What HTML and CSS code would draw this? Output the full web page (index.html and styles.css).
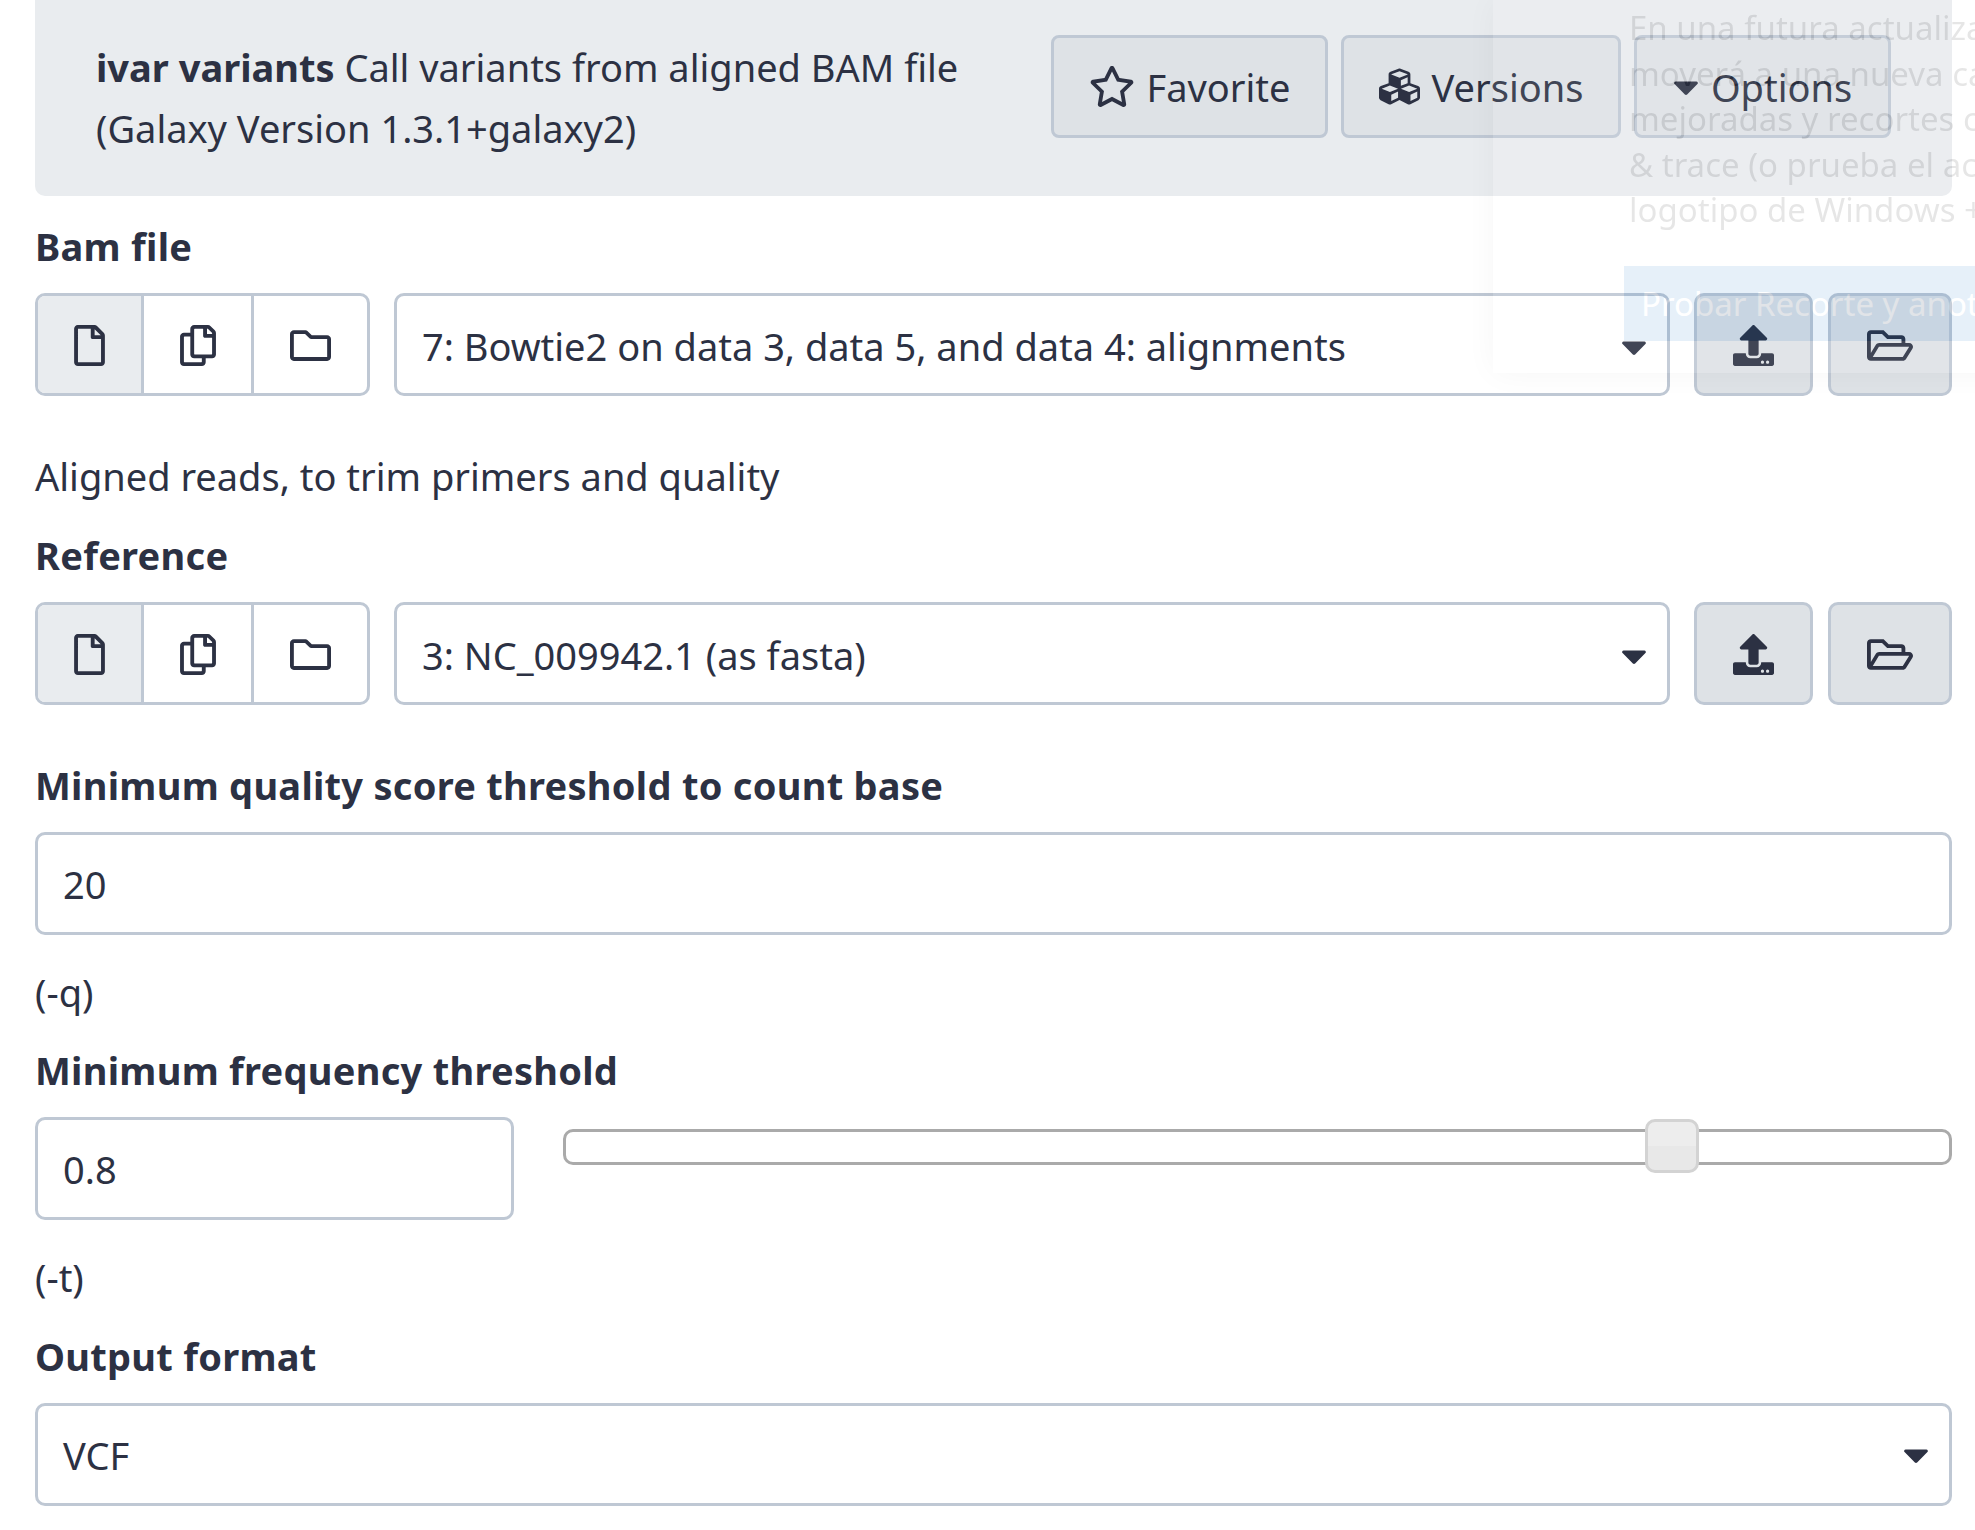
FILE: index.html
```html
<!DOCTYPE html>
<html>
<head>
    <meta charset="UTF-8">
    <title>ivar variants</title>
    <link rel="stylesheet" href="styles.css">
</head>
<body>
    <svg class="sprites" xmlns="http://www.w3.org/2000/svg">
        <symbol id="i-star" viewBox="0 0 576 512"><path d="M528.1 171.5L382 150.2 316.7 17.8c-11.7-23.6-45.6-23.9-57.4 0L194 150.2 47.9 171.5c-26.2 3.8-36.7 36.1-17.7 54.6l105.7 103-25 145.5c-4.5 26.3 23.2 46 46.4 33.7L288 439.6l130.7 68.7c23.2 12.2 50.9-7.4 46.4-33.7l-25-145.5 105.7-103c19-18.5 8.5-50.8-17.7-54.6zM388.6 312.3l23.7 138.4L288 385.4l-124.3 65.3 23.7-138.4-100.6-98 139-20.2 62.2-126 62.2 126 139 20.2-100.6 98z"/></symbol>
        <symbol id="i-cubes" viewBox="0 0 512 512"><path d="M488.6 250.2L392 214V105.5c0-15-9.3-28.4-23.4-33.7l-100-37.5c-8.1-3.1-17.1-3.1-25.3 0l-100 37.5c-14.1 5.3-23.4 18.7-23.4 33.7V214l-96.6 36.2C9.3 255.5 0 268.9 0 283.9V394c0 13.6 7.7 26.1 19.9 32.2l100 50c10.1 5.1 22.1 5.1 32.2 0l103.9-52 103.9 52c10.1 5.1 22.1 5.1 32.2 0l100-50c12.2-6.1 19.9-18.6 19.9-32.2V283.9c0-15-9.3-28.4-23.4-33.7zM358 214.8l-85 31.9v-68.2l85-37v73.3zM154 104.1l102-38.2 102 38.2v.6l-102 41.4-102-41.4v-.6zm84 291.1l-85 42.5v-79.1l85-38.8v75.4zm0-112l-102 41.4-102-41.4v-.6l102-38.2 102 38.2v.6zm240 112l-85 42.5v-79.1l85-38.8v75.4zm0-112l-102 41.4-102-41.4v-.6l102-38.2 102 38.2v.6z"/></symbol>
        <symbol id="i-caret" viewBox="0 0 320 512"><path d="M31.3 192h257.3c17.8 0 26.7 21.5 14.1 34.1L174.1 354.8c-7.8 7.8-20.5 7.8-28.3 0L17.2 226.1C4.6 213.5 13.5 192 31.3 192z"/></symbol>
        <symbol id="i-file" viewBox="0 0 384 512"><path d="M369.9 97.9L286 14C277 5 264.8-.1 252.1-.1H48C21.5 0 0 21.5 0 48v416c0 26.5 21.5 48 48 48h288c26.5 0 48-21.5 48-48V131.9c0-12.7-5.1-25-14.1-34zM332.1 128H256V51.9l76.1 76.1zM48 464V48h160v104c0 13.3 10.7 24 24 24h104v288H48z"/></symbol>
        <symbol id="i-copy" viewBox="0 0 448 512"><path d="M433.941 65.941l-51.882-51.882A48 48 0 0 0 348.118 0H176c-26.51 0-48 21.49-48 48v48H48c-26.51 0-48 21.49-48 48v320c0 26.51 21.49 48 48 48h224c26.51 0 48-21.49 48-48v-48h80c26.51 0 48-21.49 48-48V99.882a48 48 0 0 0-14.059-33.941zM266 464H54a6 6 0 0 1-6-6V150a6 6 0 0 1 6-6h74v224c0 26.51 21.49 48 48 48h96v42a6 6 0 0 1-6 6zm128-96H182a6 6 0 0 1-6-6V54a6 6 0 0 1 6-6h106v88c0 13.255 10.745 24 24 24h88v202a6 6 0 0 1-6 6zm6-256h-64V48h9.632c1.591 0 3.117.632 4.243 1.757l48.368 48.368a6 6 0 0 1 1.757 4.243V112z"/></symbol>
        <symbol id="i-folder" viewBox="0 0 512 512"><path d="M464 128H272l-54.63-54.63c-6-6-14.14-9.37-22.63-9.37H48C21.49 64 0 85.49 0 112v288c0 26.51 21.49 48 48 48h416c26.51 0 48-21.49 48-48V176c0-26.51-21.49-48-48-48zm0 272H48V112h140.12l54.63 54.63c6 6 14.14 9.37 22.63 9.37H464v224z"/></symbol>
        <symbol id="i-upload" viewBox="0 0 512 512"><path d="M296 384h-80c-13.3 0-24-10.7-24-24V192h-87.7c-17.8 0-26.7-21.5-14.1-34.1L242.3 5.7c7.5-7.5 19.8-7.5 27.3 0l152.2 152.2c12.6 12.6 3.7 34.1-14.1 34.1H320v168c0 13.3-10.7 24-24 24zm216-8v112c0 13.3-10.7 24-24 24H24c-13.3 0-24-10.7-24-24V376c0-13.3 10.7-24 24-24h136v8c0 30.9 25.1 56 56 56h80c30.9 0 56-25.1 56-56v-8h136c13.3 0 24 10.7 24 24zm-124 88c0-11-9-20-20-20s-20 9-20 20 9 20 20 20 20-9 20-20zm64 0c0-11-9-20-20-20s-20 9-20 20 9 20 20 20 20-9 20-20z"/></symbol>
        <symbol id="i-folder-open" viewBox="0 0 576 512"><path d="M527.9 224H480v-48c0-26.5-21.5-48-48-48H272l-64-64H48C21.5 64 0 85.5 0 112v288c0 26.5 21.5 48 48 48h400c16.5 0 31.9-8.5 40.7-22.6l79.9-128c20-31.9-3-73.4-40.7-73.4zM48 118c0-3.3 2.7-6 6-6h134.1l64 64H426c3.3 0 6 2.7 6 6v42H152c-16.8 0-32.4 8.8-41.1 23.2L48 351.4zm400 282H72l77.2-128H528z"/></symbol>
    </svg>

    <div class="tool-header">
        <div class="tool-title"><b>ivar variants</b> Call variants from aligned BAM file (Galaxy Version 1.3.1+galaxy2)</div>
        <div class="tool-buttons">
            <button class="btn btn-favorite"><svg class="icon icon-star"><use href="#i-star"/></svg>Favorite</button>
            <button class="btn btn-versions"><svg class="icon icon-cubes"><use href="#i-cubes"/></svg>Versions</button>
            <button class="btn btn-options"><svg class="icon icon-caret"><use href="#i-caret"/></svg>Options</button>
        </div>
    </div>

    <div class="field">
        <div class="label">Bam file</div>
        <div class="data-row">
            <div class="btn-group">
                <div class="group-btn group-btn-active"><svg class="icon icon-file"><use href="#i-file"/></svg></div>
                <div class="group-btn"><svg class="icon icon-copy"><use href="#i-copy"/></svg></div>
                <div class="group-btn"><svg class="icon icon-folder"><use href="#i-folder"/></svg></div>
            </div>
            <div class="select">7: Bowtie2 on data 3, data 5, and data 4: alignments<svg class="icon icon-caret"><use href="#i-caret"/></svg></div>
            <div class="side-btn side-upload"><svg class="icon icon-upload"><use href="#i-upload"/></svg></div>
            <div class="side-btn side-browse"><svg class="icon icon-folder-open"><use href="#i-folder-open"/></svg></div>
        </div>
        <div class="help help-data">Aligned reads, to trim primers and quality</div>
    </div>

    <div class="field field-spaced">
        <div class="label">Reference</div>
        <div class="data-row">
            <div class="btn-group">
                <div class="group-btn group-btn-active"><svg class="icon icon-file"><use href="#i-file"/></svg></div>
                <div class="group-btn"><svg class="icon icon-copy"><use href="#i-copy"/></svg></div>
                <div class="group-btn"><svg class="icon icon-folder"><use href="#i-folder"/></svg></div>
            </div>
            <div class="select">3: NC_009942.1 (as fasta)<svg class="icon icon-caret"><use href="#i-caret"/></svg></div>
            <div class="side-btn side-upload"><svg class="icon icon-upload"><use href="#i-upload"/></svg></div>
            <div class="side-btn side-browse"><svg class="icon icon-folder-open"><use href="#i-folder-open"/></svg></div>
        </div>
    </div>

    <div class="field field-after-data">
        <div class="label">Minimum quality score threshold to count base</div>
        <input class="text-input" type="text" value="20">
        <div class="help">(-q)</div>
    </div>

    <div class="field">
        <div class="label">Minimum frequency threshold</div>
        <div class="slider-row">
            <input class="text-input text-input-short" type="text" value="0.8">
            <div class="slider"><div class="slider-handle"></div></div>
        </div>
        <div class="help">(-t)</div>
    </div>

    <div class="field field-spaced">
        <div class="label">Output format</div>
        <div class="select select-wide">VCF<svg class="icon icon-caret"><use href="#i-caret"/></svg></div>
    </div>

    <!-- windows snip notification fading out on top of the page -->
    <div class="toast">
        <div class="toast-text">En una futura actualización<br>moverá a una nueva carpeta<br>mejoradas y recortes con<br>&amp; trace (o prueba el acceso<br>logotipo de Windows + Mayús</div>
        <div class="toast-action">Probar Recorte y anotación</div>
    </div>
</body>
</html>
```

FILE: styles.css
```css
* {
    box-sizing: border-box;
}
html, body {
    height: 100%;
}
body {
    font-family: 'Noto Sans', sans-serif;
    font-size: 38px;
    color: #2c3143;
    background-color: #fff;
    margin: 0;
    padding: 0 23px 0 35px;
    overflow: hidden;
    position: relative;
}
.sprites {
    display: none;
}
.icon {
    height: 41px;
    fill: #2c3143;
    flex-shrink: 0;
}
.icon-star, .icon-folder-open {
    width: 46px;
}
.icon-cubes, .icon-folder, .icon-upload {
    width: 41px;
}
.icon-file {
    width: 31px;
}
.icon-copy {
    width: 36px;
}
.icon-caret {
    width: 26px;
}

.tool-header {
    height: 196px;
    background-color: #e9ecef;
    border-radius: 0 0 10px 10px;
    padding: 35px 61px 0 61px;
    display: flex;
    justify-content: space-between;
}
.tool-title {
    width: 880px;
    padding-top: 2px;
    line-height: 61px;
}
.tool-title b {
    font-weight: 700;
}
.tool-buttons {
    display: flex;
    gap: 13px;
}
.btn {
    height: 103px;
    font: inherit;
    color: inherit;
    background-color: #dee2e6;
    border: 3px solid #bfc8d4;
    border-radius: 8px;
    display: flex;
    align-items: center;
    justify-content: center;
    gap: 12px;
    padding: 0;
}
.btn-favorite {
    width: 277px;
}
.btn-versions {
    width: 280px;
}
.btn-options {
    width: 257px;
}

.field {
    margin-top: 30px;
}
.field + .field {
    margin-top: 38px;
}
.field + .field-spaced {
    margin-top: 39px;
}
.field + .field-after-data {
    margin-top: 60px;
}
.label {
    font-weight: 700;
    letter-spacing: 0.27px;
    line-height: 40px;
    margin-bottom: 27px;
}
.help {
    line-height: 40px;
    margin-top: 37px;
}
.help-data {
    margin-top: 60px;
}
.data-row {
    display: flex;
    height: 103px;
}
.data-row .icon {
    margin-top: 2px;
}
.data-row .select {
    padding-top: 2px;
}
.btn-group {
    width: 335px;
    display: flex;
    border: 3px solid #bfc8d4;
    border-radius: 10px;
    overflow: hidden;
    margin-right: 24px;
}
.group-btn {
    display: flex;
    align-items: center;
    justify-content: center;
    width: 110px;
    border-left: 3px solid #bfc8d4;
}
.group-btn:first-child {
    width: 103px;
    border-left: 0;
}
.group-btn:last-child {
    flex: 1;
}
.group-btn-active {
    background-color: #e9ecef;
}
.select {
    width: 1276px;
    height: 103px;
    display: flex;
    align-items: center;
    justify-content: space-between;
    padding: 0 20px 0 25px;
    border: 3px solid #bfc8d4;
    border-radius: 10px;
    background-color: #fff;
}
.select-wide {
    width: 100%;
}
.side-btn {
    display: flex;
    align-items: center;
    justify-content: center;
    background-color: #dee2e6;
    border: 3px solid #bfc8d4;
    border-radius: 10px;
}
.side-upload {
    width: 119px;
    margin-left: 24px;
}
.side-browse {
    width: 124px;
    margin-left: 15px;
}
.text-input {
    display: block;
    width: 100%;
    height: 103px;
    font: inherit;
    color: inherit;
    padding: 0 25px;
    border: 3px solid #bfc8d4;
    border-radius: 10px;
    outline: none;
}
.text-input-short {
    width: 479px;
    flex-shrink: 0;
}
.slider-row {
    display: flex;
    align-items: flex-start;
    gap: 49px;
}
.slider {
    flex: 1;
    height: 36px;
    margin-top: 12px;
    border: 3px solid #aaa;
    border-radius: 10px;
    position: relative;
}
.slider-handle {
    position: absolute;
    left: 1079px;
    top: -13px;
    width: 54px;
    height: 54px;
    border: 3px solid #d3d3d3;
    border-radius: 10px;
    background: linear-gradient(to bottom, #ededed 50%, #e8e8e8 50%);
}

.toast {
    position: absolute;
    top: 0;
    left: 1493px;
    width: 600px;
    height: 373px;
    padding: 5px 0 0 136px;
    background-color: #fff;
    box-shadow: 0 0 30px rgba(0, 0, 0, 0.4);
    opacity: 0.1;
    color: #000;
    font-size: 33px;
    white-space: nowrap;
    overflow: hidden;
}
.toast-text {
    line-height: 45.5px;
}
.toast-action {
    position: absolute;
    left: 131px;
    top: 266px;
    width: 470px;
    height: 75px;
    padding-left: 17px;
    line-height: 76px;
    background-color: #0067c0;
    color: #fff;
}
```
